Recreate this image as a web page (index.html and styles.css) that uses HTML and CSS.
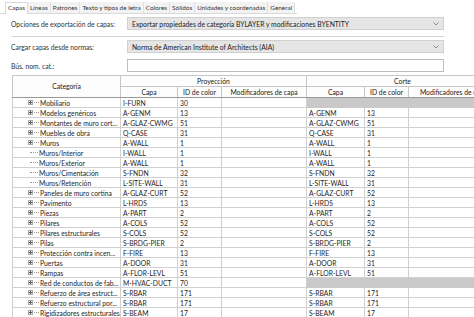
FILE: index.html
```html
<!DOCTYPE html>
<html lang="es">
<head>
  <meta charset="UTF-8" />
  <title>Capas</title>
  <link rel="stylesheet" href="styles.css">
</head>
<body>

  <!-- === Tabs === -->
  <div class="tabs">
    <span class="tab active">Capas</span>
    <span class="tab">Líneas</span>
    <span class="tab">Patrones</span>
    <span class="tab">Texto y tipos de letra</span>
    <span class="tab">Colores</span>
    <span class="tab">Sólidos</span>
    <span class="tab">Unidades y coordenadas</span>
    <span class="tab">General</span>
  </div>

  <!-- === Options === -->
  <div class="panel">
    <div class="field">
      <label>Opciones de exportación de capas:</label>
      <div class="select">
        <span>Exportar propiedades de categoría BYLAYER y modificaciones BYENTITY</span>
        <svg class="chev" width="6" height="4" viewBox="0 0 6 4"><path d="M0.5 0.5 L3 3 L5.5 0.5" fill="none" stroke="#777" stroke-width="0.8"/></svg>
      </div>
    </div>

    <div class="sep"></div>

    <div class="field">
      <label>Cargar capas desde normas:</label>
      <div class="select">
        <span>Norma de American Institute of Architects (AIA)</span>
        <svg class="chev" width="6" height="4" viewBox="0 0 6 4"><path d="M0.5 0.5 L3 3 L5.5 0.5" fill="none" stroke="#777" stroke-width="0.8"/></svg>
      </div>
    </div>

    <div class="field search">
      <label>Bús. nom. cat.:</label>
      <div class="input"></div>
    </div>
  </div>

  <!-- === Layer grid === -->
  <div class="grid-wrap">
    <table class="grid">
      <colgroup>
        <col style="width:108px"><col style="width:57px"><col style="width:44px"><col style="width:85px">
        <col style="width:58px"><col style="width:44px"><col style="width:90px">
      </colgroup>
      <thead>
        <tr class="h1">
          <th rowspan="2" class="cat-h">Categoría</th>
          <th colspan="3">Proyección</th>
          <th colspan="3">Corte</th>
        </tr>
        <tr class="h2">
          <th>Capa</th><th>ID de color</th><th>Modificadores de capa</th>
          <th>Capa</th><th>ID de color</th><th>Modificadores de capa</th>
        </tr>
      </thead>
      <tbody id="rows"></tbody>
    </table>
  </div>

  <script>
    // [name, child?, capa, id, corte disabled?]
    const rows = [
      ['Mobiliario', 0, 'I-FURN', '30', 1],
      ['Modelos genéricos', 0, 'A-GENM', '13'],
      ['Montantes de muro cort...', 0, 'A-GLAZ-CWMG', '51'],
      ['Muebles de obra', 0, 'Q-CASE', '31'],
      ['Muros', 0, 'A-WALL', '1'],
      ['Muros/Interior', 1, 'I-WALL', '1'],
      ['Muros/Exterior', 1, 'A-WALL', '1'],
      ['Muros/Cimentación', 1, 'S-FNDN', '32'],
      ['Muros/Retención', 1, 'L-SITE-WALL', '31'],
      ['Paneles de muro cortina', 0, 'A-GLAZ-CURT', '52'],
      ['Pavimento', 0, 'L-HRDS', '13'],
      ['Piezas', 0, 'A-PART', '2'],
      ['Pilares', 0, 'A-COLS', '52'],
      ['Pilares estructurales', 0, 'S-COLS', '52'],
      ['Pilas', 0, 'S-BRDG-PIER', '2'],
      ['Protección contra incen...', 0, 'F-FIRE', '13'],
      ['Puertas', 0, 'A-DOOR', '31'],
      ['Rampas', 0, 'A-FLOR-LEVL', '51'],
      ['Red de conductos de fab...', 0, 'M-HVAC-DUCT', '70', 1],
      ['Refuerzo de área estruct...', 0, 'S-RBAR', '171'],
      ['Refuerzo estructural  por...', 0, 'S-RBAR', '171'],
      ['Rigidizadores estructurales', 0, 'S-BEAM', '17']
    ];

    const tbody = document.getElementById('rows');
    let html = '';
    rows.forEach(([name, child, capa, id, off]) => {
      const node = child
        ? '<span class="leaf"></span>'
        : '<span class="plus"></span><span class="dash"></span>';
      const corte = off
        ? '<td class="off"></td><td class="off"></td><td class="off"></td>'
        : `<td>${capa}</td><td>${id}</td><td></td>`;
      html += `<tr><td class="cat"><div class="node">${node}<span>${name}</span></div></td>` +
              `<td>${capa}</td><td>${id}</td><td></td>${corte}</tr>`;
    });
    tbody.innerHTML = html;
  </script>

</body>
</html>
```

FILE: styles.css
```css
body {
  margin: 0;
  background: #fff;
  color: #222;
  font-family: Lato, 'Noto Sans', sans-serif;
  font-size: 6.8px;
  width: 474px;
  height: 317px;
  overflow: hidden;
}

/* === Tabs === */
.tabs {
  display: flex;
  height: 11px;
  margin-top: 2px;
  padding-left: 5px;
  border-bottom: 1px solid #d9d9d9;
  width: 292px;
  white-space: nowrap;
  font-size: 6.4px;
}

.tab {
  padding: 0 2px;
  line-height: 11px;
  background: #f3f3f3;
  border-right: 1px solid #e0e0e0;
  color: #333;
}

.tab.active {
  background: #fff;
  border: 1px solid #d9d9d9;
  border-bottom: none;
  line-height: 10px;
  margin-bottom: -1px;
}

/* === Option fields === */
.panel {
  padding: 3px 30px 0 11px;
}

.field {
  display: flex;
  align-items: center;
  height: 13px;
  white-space: nowrap;
}

.field label {
  width: 116px;
  flex: none;
  color: #333;
}

.select {
  flex: 1;
  height: 13px;
  box-sizing: border-box;
  background: #e5e5e5;
  border: 1px solid #d0d0d0;
  display: flex;
  align-items: center;
  justify-content: space-between;
  padding: 0 4px 0 4px;
}

.sep {
  height: 1px;
  background: #d2d2d2;
  margin: 6px 0 3px 1px;
}

.search {
  margin-top: 6px;
}

.input {
  flex: 1;
  height: 13px;
  box-sizing: border-box;
  border: 1px solid #bdbdbd;
  background: #fff;
}

/* === Grid === */
.grid-wrap {
  margin: 3px 0 0 12px;
  width: 462px;
  overflow: hidden;
}

.grid {
  table-layout: fixed;
  border-collapse: collapse;
  width: 486px;
  border-top: 1px solid #8c8c8c;
  border-left: 1px solid #8c8c8c;
}

.grid tr {
  height: 10px;
}

.grid thead tr {
  height: 11px;
}

.grid th {
  font-weight: normal;
  padding: 0;
  text-align: center;
  border: 1px solid #c6c6c6;
  background: #fdfdfd;
  white-space: nowrap;
  overflow: hidden;
  line-height: 9px;
}

.grid .cat-h,
.grid .h2 th {
  border-bottom-color: #9a9a9a;
}

.grid td {
  padding: 0 0 0 2px;
  border: 1px solid #d0d0d0;
  white-space: nowrap;
  overflow: hidden;
  line-height: 8px;
  color: #1e1e1e;
}

.grid td.off {
  background: #c9c9c9;
  border-color: #c9c9c9;
}

/* === Tree nodes === */
.grid td.cat {
  padding-left: 15px;
}

.node {
  display: flex;
  align-items: center;
  height: 8px;
}

.plus {
  position: relative;
  flex: none;
  width: 3px;
  height: 3px;
  border: 1px solid #a6a6a6;
  background: #f4f4f4;
}

.plus::before,
.plus::after {
  content: '';
  position: absolute;
  background: #555;
}

.plus::before {
  left: 0;
  top: 1px;
  width: 3px;
  height: 1px;
}

.plus::after {
  left: 1px;
  top: 0;
  width: 1px;
  height: 3px;
}

.dash {
  flex: none;
  width: 5px;
  border-top: 1px dotted #999;
  margin: 0 1px;
}

.leaf {
  flex: none;
  width: 8px;
  margin: 0 1px 0 2px;
  border-top: 1px dotted #999;
}
```
